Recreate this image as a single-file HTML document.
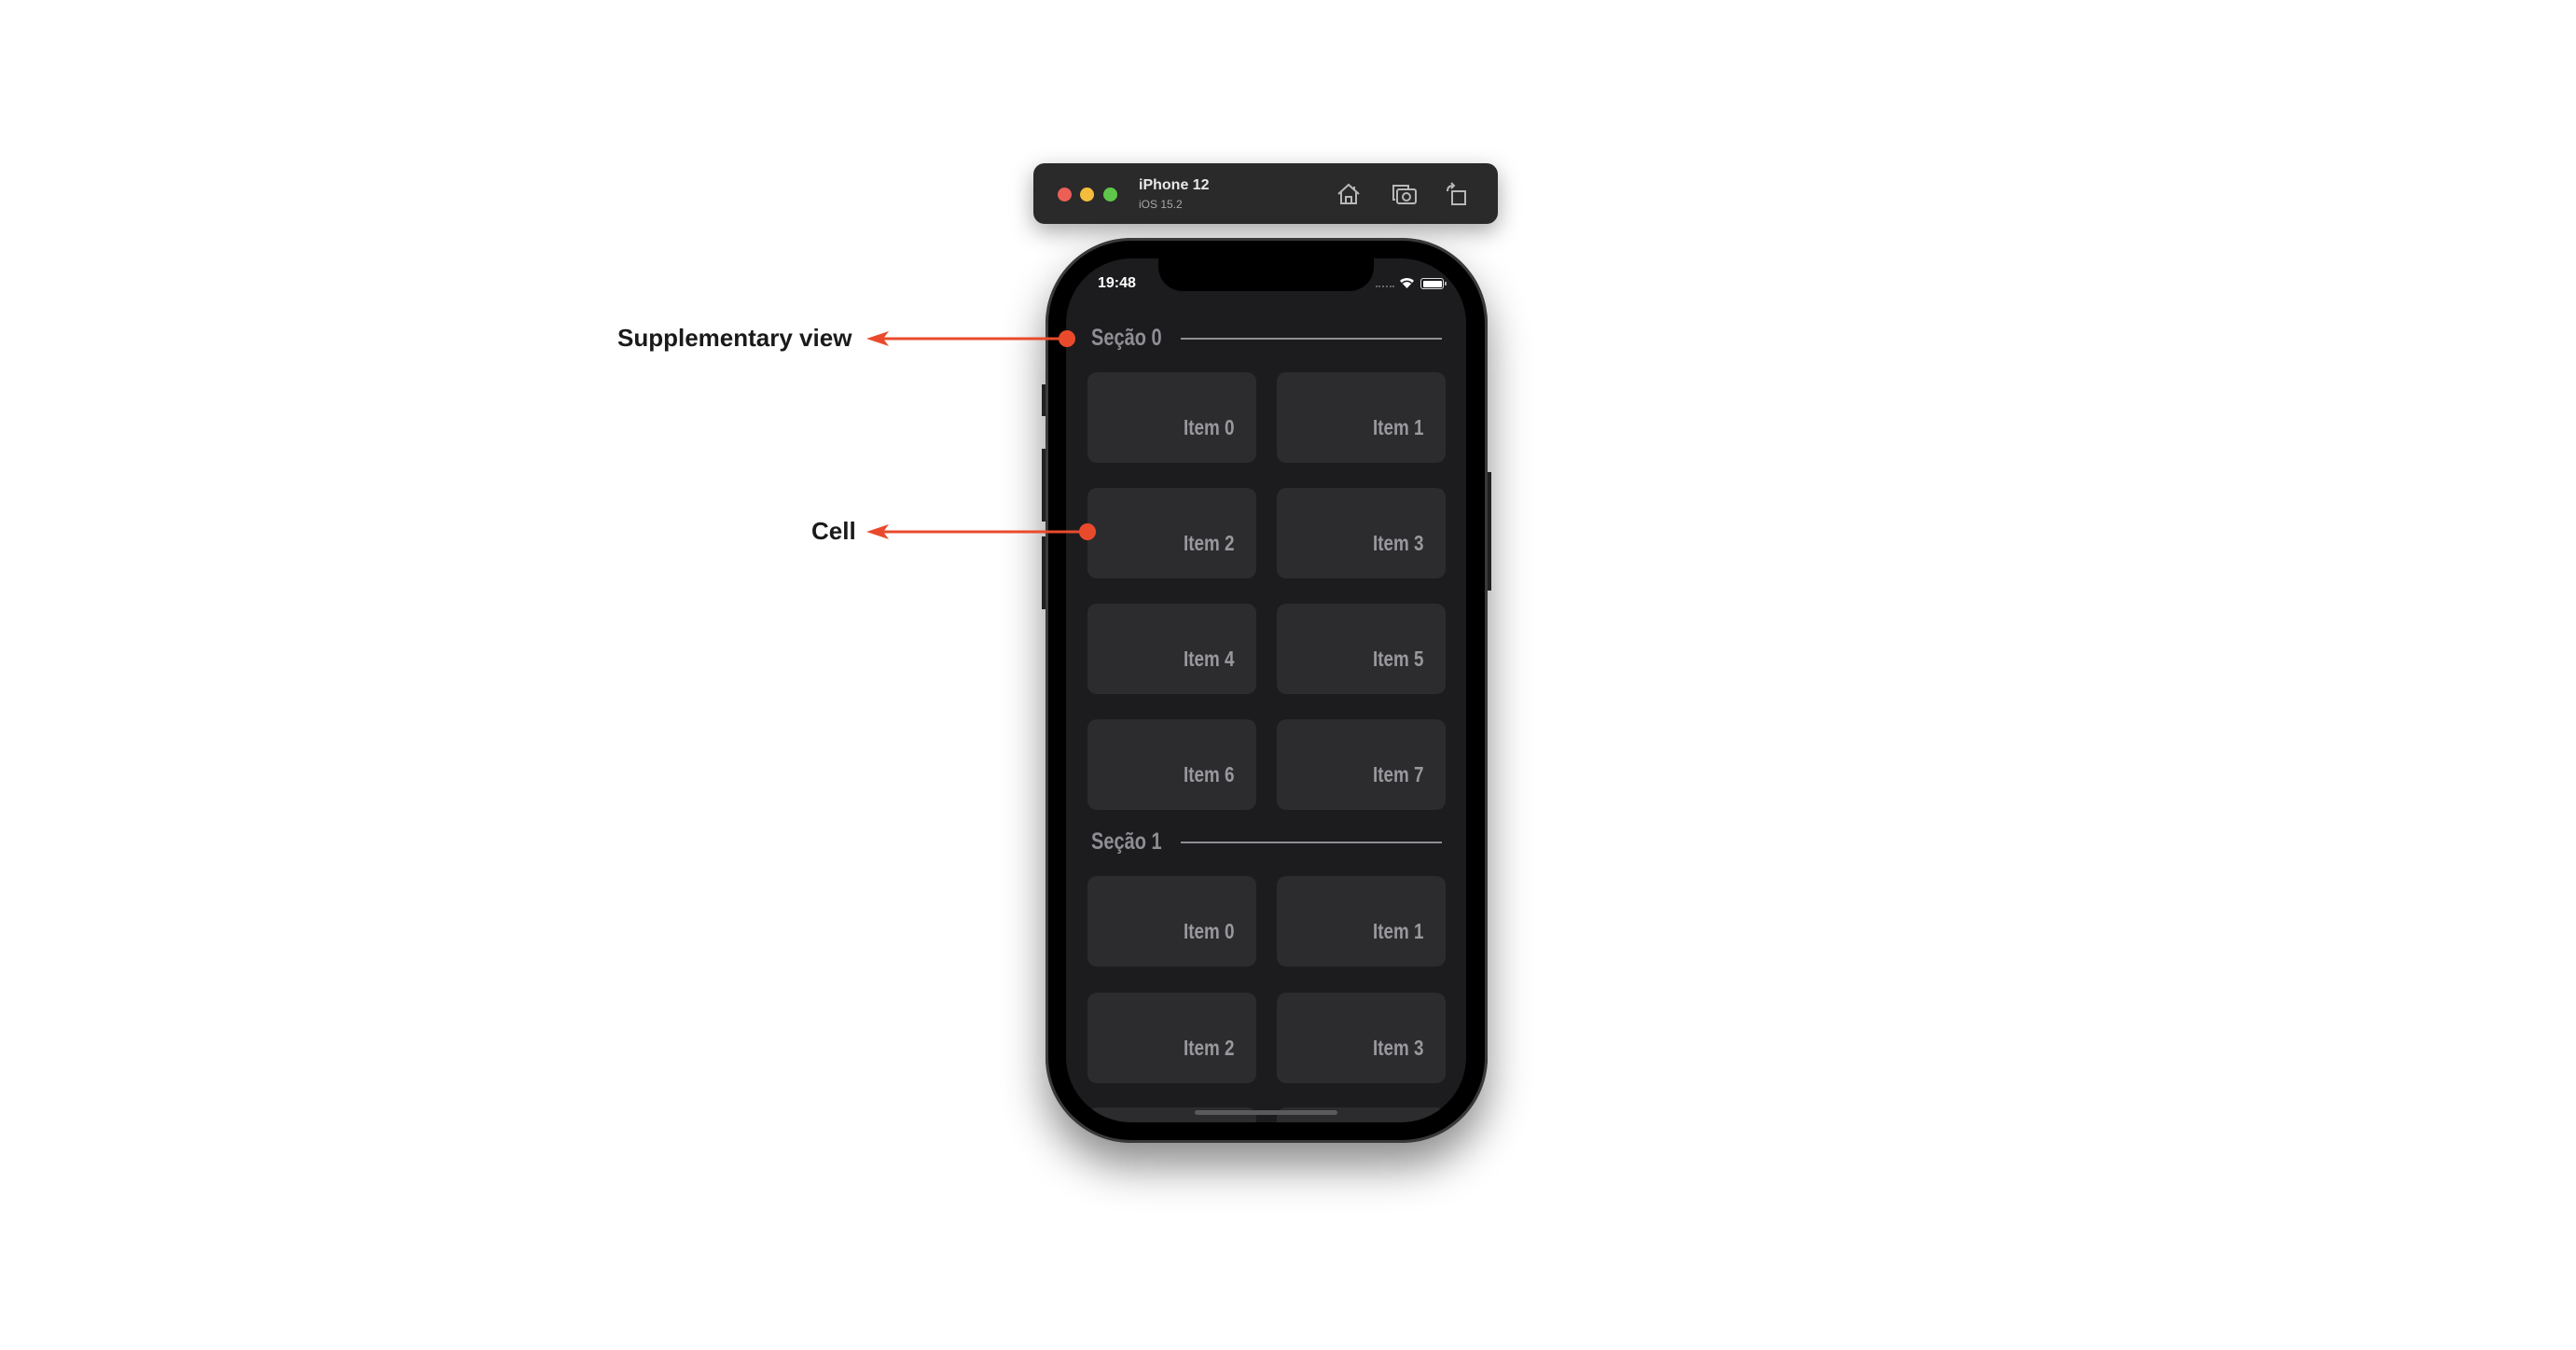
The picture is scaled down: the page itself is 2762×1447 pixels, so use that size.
<!DOCTYPE html>
<html><head><meta charset="utf-8"><style>
*{margin:0;padding:0;box-sizing:border-box}
body{width:2762px;height:1447px;background:#fff;position:relative;overflow:hidden;font-family:"Liberation Sans",sans-serif}
.abs{position:absolute}
.tb{left:1108px;top:175px;width:498px;height:65px;background:#2a2a2a;border-radius:12px;box-shadow:0 8px 24px rgba(0,0,0,.35)}
.light{width:15px;height:15px;border-radius:50%;top:201px}
.phone{left:1121px;top:255px;width:474px;height:970px;background:#000;border-radius:92px;box-shadow:0 25px 45px rgba(0,0,0,.45),inset 0 0 0 3px #3a3a3c}
.screen{left:1143px;top:277px;width:429px;height:926px;background:#1c1c1e;border-radius:70px;overflow:hidden}
.notch{left:1242px;top:270px;width:231px;height:42px;background:#000;border-radius:0 0 26px 26px}
.cell{position:absolute;width:181px;height:97px;background:#2c2c2e;border-radius:10px}
.cell span{position:absolute;right:24px;top:46px;font-weight:bold;font-size:23px;color:#98989d;transform:scaleX(.82);transform-origin:right center;white-space:nowrap}
.hdr{position:absolute;left:27px;font-weight:bold;font-size:25px;color:#8e8e93;transform:scaleX(.8);transform-origin:left center;white-space:nowrap}
.line{position:absolute;left:123px;width:280px;height:2px;background:#8e8e93}
.lbl{font-weight:bold;font-size:26px;color:#1a1a1a}
.btn{background:#2a2a2a;width:4px}
</style></head><body>
<div class="abs tb"></div>
<div class="abs light" style="left:1134px;background:#ec5f57"></div>
<div class="abs light" style="left:1158px;background:#f4bd3b"></div>
<div class="abs light" style="left:1183px;background:#5fc64a"></div>
<div class="abs" style="left:1221px;top:190px;font-size:16px;font-weight:bold;color:#e8e8e8">iPhone 12</div>
<div class="abs" style="left:1221px;top:212px;font-size:12px;color:#a8a8a8">iOS 15.2</div>
<svg class="abs" style="left:1432px;top:196px" width="28" height="24" viewBox="0 0 28 24" fill="none" stroke="#b8b8b8" stroke-width="2"><path d="M3 12 L14 2 L25 12 M6 10 V22 H22 V10 M11 22 V15 H17 V22"/><path d="M20 4 V8"/></svg>
<svg class="abs" style="left:1492px;top:196px" width="28" height="24" viewBox="0 0 28 24" fill="none" stroke="#b8b8b8" stroke-width="2"><path d="M4 18 H2 V3 H18 V6"/><rect x="6" y="7" width="20" height="15" rx="2"/><circle cx="16" cy="15" r="4"/></svg>
<svg class="abs" style="left:1549px;top:195px" width="26" height="28" viewBox="0 0 26 28" fill="none" stroke="#b8b8b8" stroke-width="2"><rect x="8" y="10" width="14" height="14"/><path d="M3 10 Q3 4 9 4"/><path d="M7 1 L10 4 L7 7"/></svg>

<div class="abs btn" style="left:1117px;top:412px;height:34px"></div>
<div class="abs btn" style="left:1117px;top:481px;height:78px"></div>
<div class="abs btn" style="left:1117px;top:575px;height:78px"></div>
<div class="abs btn" style="left:1595px;top:506px;height:127px"></div>
<div class="abs phone"></div>
<div class="abs screen">
 <div class="hdr" style="top:71px">Seção 0</div><div class="line" style="top:85px"></div>
 <div class="cell" style="left:23px;top:122px"><span>Item 0</span></div>
 <div class="cell" style="left:226px;top:122px"><span>Item 1</span></div>
 <div class="cell" style="left:23px;top:246px"><span>Item 2</span></div>
 <div class="cell" style="left:226px;top:246px"><span>Item 3</span></div>
 <div class="cell" style="left:23px;top:370px"><span>Item 4</span></div>
 <div class="cell" style="left:226px;top:370px"><span>Item 5</span></div>
 <div class="cell" style="left:23px;top:494px"><span>Item 6</span></div>
 <div class="cell" style="left:226px;top:494px"><span>Item 7</span></div>
 <div class="hdr" style="top:611px">Seção 1</div><div class="line" style="top:625px"></div>
 <div class="cell" style="left:23px;top:662px"><span>Item 0</span></div>
 <div class="cell" style="left:226px;top:662px"><span>Item 1</span></div>
 <div class="cell" style="left:23px;top:787px"><span>Item 2</span></div>
 <div class="cell" style="left:226px;top:787px"><span>Item 3</span></div>
 <div class="cell" style="left:23px;top:910px"></div>
 <div class="cell" style="left:226px;top:910px"></div>
 <div class="abs" style="left:138px;top:913px;width:153px;height:5px;border-radius:3px;background:#5a5a5c"></div>
</div>
<div class="abs notch"></div>
<div class="abs" style="left:1177px;top:295px;font-size:16px;font-weight:bold;color:#fff">19:48</div>
<div class="abs" style="left:1475px;top:306px;width:20px;height:0;border-top:2px dotted #666"></div>
<svg class="abs" style="left:1500px;top:297px" width="17" height="13" viewBox="0 0 17 13"><path d="M8.5 12 L1 4 A11 11 0 0 1 16 4 Z" fill="#fff"/><path d="M3.5 6.5 A7 7 0 0 1 13.5 6.5" stroke="#1c1c1e" stroke-width="1.5" fill="none"/></svg>
<div class="abs" style="left:1523px;top:298px;width:25px;height:12px;border:1.5px solid #ddd;border-radius:3px;padding:1.5px"><div style="width:100%;height:100%;background:#fff;border-radius:1px"></div></div>
<div class="abs" style="left:1549px;top:302px;width:2px;height:4px;background:#aaa"></div>

<div class="abs lbl" style="left:662px;top:347px">Supplementary view</div>
<div class="abs lbl" style="left:870px;top:554px">Cell</div>
<svg class="abs" style="left:0;top:0" width="2762" height="1447">
<g fill="#ea4a2c" stroke="#ea4a2c">
<line x1="945" y1="363" x2="1144" y2="363" stroke-width="3"/>
<path d="M929 363 L953 355 L947 363 L953 371 Z" stroke="none"/>
<circle cx="1144" cy="363" r="9" stroke="none"/>
<line x1="945" y1="570" x2="1166" y2="570" stroke-width="3"/>
<path d="M929 570 L953 562 L947 570 L953 578 Z" stroke="none"/>
<circle cx="1166" cy="570" r="9" stroke="none"/>
</g></svg>
</body></html>
